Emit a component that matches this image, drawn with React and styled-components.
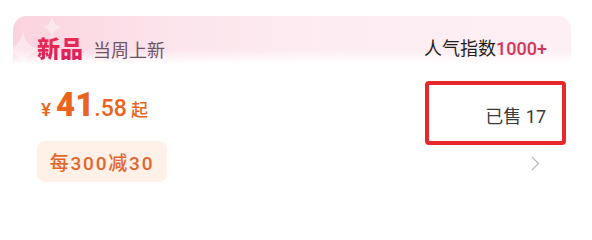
import React from "react";
import styled, { createGlobalStyle } from "styled-components";

const Global = createGlobalStyle`
  html, body { margin: 0; padding: 0; background: #ffffff; }
  body { font-family: Roboto, "Noto Sans CJK SC", sans-serif; -webkit-font-smoothing: antialiased; }
`;

const Card = styled.div`
  width: 592px;
  height: 223px;
  box-sizing: border-box;
  padding: 16px 21px 0 13px;
  background: #ffffff;
`;

const Header = styled.div`
  position: relative;
  height: 48px;
  box-sizing: border-box;
  border-radius: 14px 14px 0 0;
  overflow: hidden;
  display: flex;
  align-items: center;
  justify-content: space-between;
  padding: 13px 24px 0;
  background:
    linear-gradient(to bottom, rgba(255,255,255,0) 70%, rgba(255,255,255,1) 100%),
    linear-gradient(to right, #fbd3df 0%, #fce5ec 30%, #fdedf2 60%, #fdeff4 100%);
`;

const Sparkle = styled.svg`
  position: absolute;
  left: ${(p) => p.$x}px;
  top: ${(p) => p.$y}px;
  width: ${(p) => p.$s}px;
  height: ${(p) => p.$s}px;
  opacity: ${(p) => p.$o};
`;

const Title = styled.div`
  position: relative;
  display: flex;
  align-items: baseline;
  gap: 10px;
`;

const Badge = styled.span`
  font-size: 23px;
  font-weight: 900;
  color: #e2285a;
  background: linear-gradient(to bottom, #ee3050, #d81e5c);
  -webkit-background-clip: text;
  background-clip: text;
  -webkit-text-fill-color: transparent;
`;

const Sub = styled.span`
  font-size: 18px;
  color: #6e5462;
`;

const Heat = styled.div`
  position: relative;
  font-size: 18px;
  color: #1f1f1f;
`;

const HeatNum = styled.span`
  color: #d3355c;
  font-weight: 500;
`;

const Body = styled.div`
  display: flex;
  justify-content: space-between;
  padding: 0 5px 0 24px;
`;

const Left = styled.div`
  display: flex;
  flex-direction: column;
  align-items: flex-start;
  padding-top: 22px;
`;

const Price = styled.div`
  display: flex;
  align-items: baseline;
  line-height: 38px;
  color: #ea6420;
  padding-left: 4px;
`;

const Yen = styled.span`
  font-size: 19px;
  font-weight: 500;
  margin-right: 5px;
`;

const Int = styled.span`
  font-size: 33px;
  font-weight: 900;
`;

const Dec = styled.span`
  font-size: 23px;
  font-weight: 500;
`;

const Qi = styled.span`
  font-size: 17px;
  font-weight: 500;
  margin-left: 4px;
`;

const Coupon = styled.div`
  margin-top: 12px;
  height: 41px;
  width: 130px;
  box-sizing: border-box;
  border-radius: 8px;
  background: #fff0e8;
  color: #e2662c;
  font-size: 19px;
  font-weight: 500;
  letter-spacing: 1.8px;
  display: flex;
  align-items: center;
  justify-content: center;
`;

const Right = styled.div`
  display: flex;
  flex-direction: column;
  align-items: flex-end;
  padding-top: 17px;
`;

const SoldBox = styled.div`
  width: 141px;
  height: 64px;
  box-sizing: border-box;
  border: 4px solid #e8272b;
  border-radius: 4px;
  display: flex;
  align-items: center;
  justify-content: flex-end;
  padding-right: 16px;
  padding-top: 3px;
  font-size: 18px;
  color: #3a3a3a;
`;

const Chevron = styled.svg`
  margin-top: 11px;
  margin-right: 26px;
  width: 9px;
  height: 15px;
`;

const Star = ({ x, y, s, o }) => (
  <Sparkle $x={x} $y={y} $s={s} $o={o} viewBox="0 0 24 24">
    <path d="M12 0 Q13 11 24 12 Q13 13 12 24 Q11 13 0 12 Q11 11 12 0Z" fill="#ffffff" />
  </Sparkle>
);

export default function App() {
  return (
    <>
      <Global />
      <Card>
        <Header>
          <Star x={28} y={0} s={22} o={0.4} />
          <Star x={-10} y={14} s={40} o={0.4} />
          <Title>
            <Badge>新品</Badge>
            <Sub>当周上新</Sub>
          </Title>
          <Heat>
            人气指数<HeatNum>1000+</HeatNum>
          </Heat>
        </Header>
        <Body>
          <Left>
            <Price>
              <Yen>¥</Yen>
              <Int>41</Int>
              <Dec>.58</Dec>
              <Qi>起</Qi>
            </Price>
            <Coupon>每300减30</Coupon>
          </Left>
          <Right>
            <SoldBox>已售 17</SoldBox>
            <Chevron viewBox="0 0 9 15">
              <path d="M1 1 L7.5 7.5 L1 14" fill="none" stroke="#bdbdbd" strokeWidth="1.4" />
            </Chevron>
          </Right>
        </Body>
      </Card>
    </>
  );
}
